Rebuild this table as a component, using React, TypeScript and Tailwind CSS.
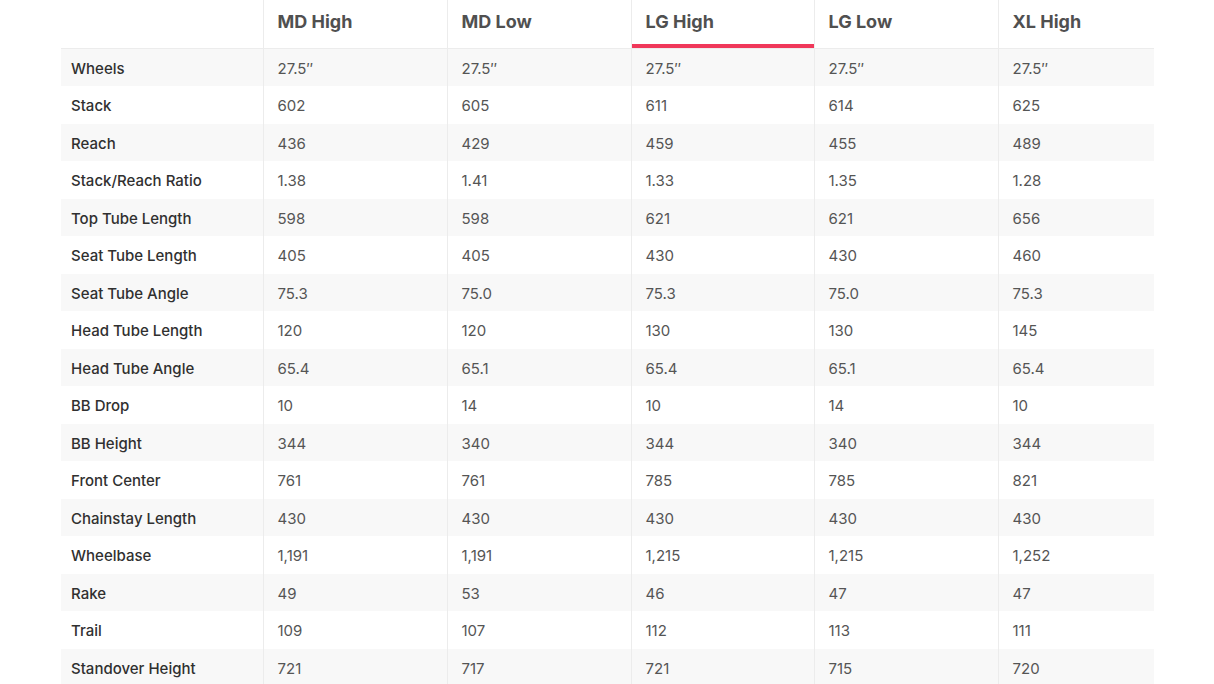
import React from "react";

const sizes = ["MD High", "MD Low", "LG High", "LG Low", "XL High"];

const rows: [string, string[]][] = [
  ["Wheels", ["27.5\u2033", "27.5\u2033", "27.5\u2033", "27.5\u2033", "27.5\u2033"]],
  ["Stack", ["602", "605", "611", "614", "625"]],
  ["Reach", ["436", "429", "459", "455", "489"]],
  ["Stack/Reach Ratio", ["1.38", "1.41", "1.33", "1.35", "1.28"]],
  ["Top Tube Length", ["598", "598", "621", "621", "656"]],
  ["Seat Tube Length", ["405", "405", "430", "430", "460"]],
  ["Seat Tube Angle", ["75.3", "75.0", "75.3", "75.0", "75.3"]],
  ["Head Tube Length", ["120", "120", "130", "130", "145"]],
  ["Head Tube Angle", ["65.4", "65.1", "65.4", "65.1", "65.4"]],
  ["BB Drop", ["10", "14", "10", "14", "10"]],
  ["BB Height", ["344", "340", "344", "340", "344"]],
  ["Front Center", ["761", "761", "785", "785", "821"]],
  ["Chainstay Length", ["430", "430", "430", "430", "430"]],
  ["Wheelbase", ["1,191", "1,191", "1,215", "1,215", "1,252"]],
  ["Rake", ["49", "53", "46", "47", "47"]],
  ["Trail", ["109", "107", "112", "113", "111"]],
  ["Standover Height", ["721", "717", "721", "715", "720"]],
];

const colWidths = ["w-[184px]", "w-[184px]", "w-[183px]", "w-[184px]", "w-[156px]"];

export default function App() {
  return (
    <div className="min-h-screen bg-white pl-[61px] font-['Inter',sans-serif] overflow-hidden h-[684px]">
      <table className="border-collapse table-fixed w-[1093px]">
        <thead>
          <tr className="h-[48px] border-b border-[#ececec]">
            <th className="w-[202px] p-0"></th>
            {sizes.map((s, i) => (
              <th
                key={s}
                className={`${colWidths[i]} p-0 border-l border-[#ececec] text-left align-top`}
              >
                <div className="h-[48px] flex flex-col">
                  <div className="flex-1 pl-[14px] pt-[8px] text-[18px] font-bold text-[#505050]">
                    {s}
                  </div>
                  {s === "LG High" ? (
                    <div className="h-[4px] bg-[#f0385a]"></div>
                  ) : (
                    <div className="h-[4px]"></div>
                  )}
                </div>
              </th>
            ))}
          </tr>
        </thead>
        <tbody>
          {rows.map(([label, vals], r) => (
            <tr
              key={label}
              className={r % 2 === 0 ? "h-[37.5px] bg-[#f8f8f8]" : "h-[37.5px] bg-white"}
            >
              <td className="p-0 pt-[3px] pl-[10px] text-[15px] font-medium text-[#303030]">{label}</td>
              {vals.map((v, i) => (
                <td
                  key={i}
                  className="p-0 pt-[3px] pl-[14px] border-l border-[#ececec] text-[15px] text-[#555555]"
                >
                  {v}
                </td>
              ))}
            </tr>
          ))}
        </tbody>
      </table>
    </div>
  );
}
